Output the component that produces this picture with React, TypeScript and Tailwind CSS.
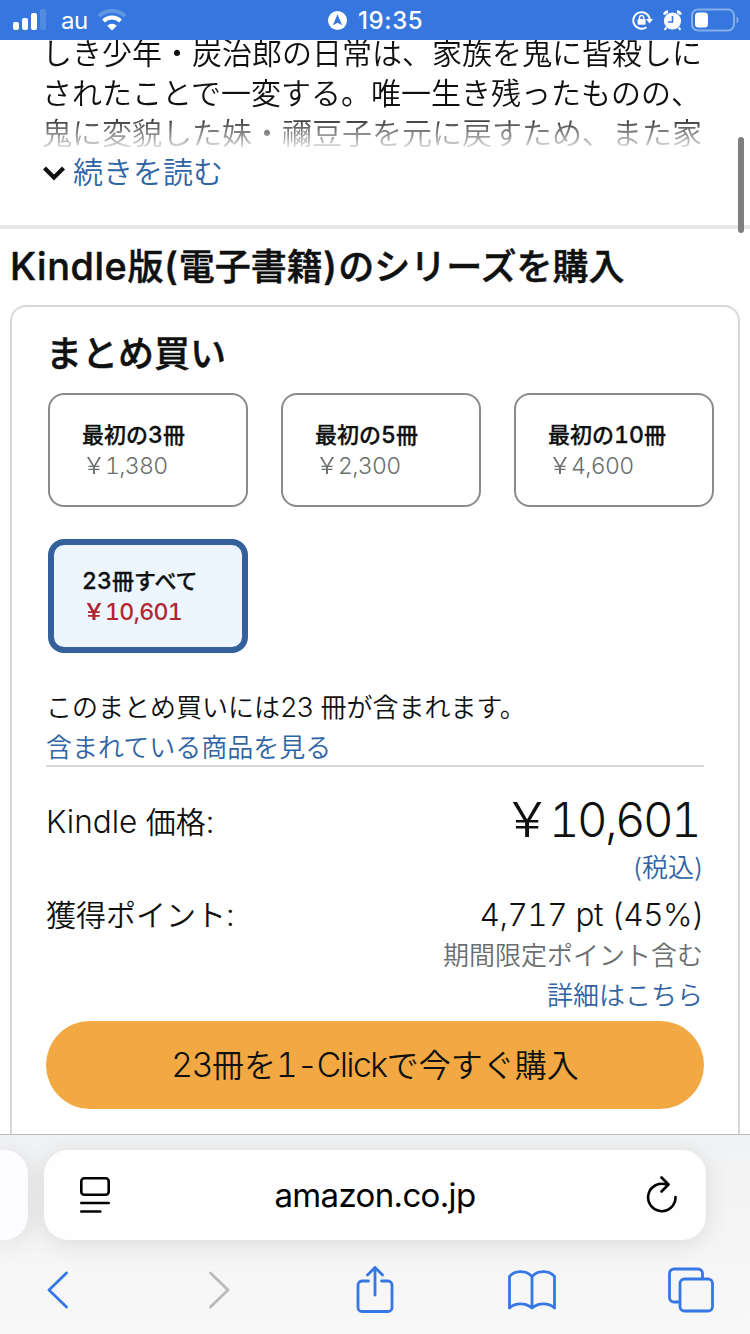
import type { ReactNode } from "react";

const bundles = [
  { title: "最初の3冊", price: "1,380" },
  { title: "最初の5冊", price: "2,300" },
  { title: "最初の10冊", price: "4,600" },
  { title: "23冊すべて", price: "10,601", selected: true },
];

export default function App() {
  return (
    <div className="relative flex h-[1334px] w-[750px] flex-col overflow-hidden bg-white font-['Inter','Noto_Sans_CJK_JP',sans-serif] font-[350] text-[#0f1111] whitespace-nowrap">
      <StatusBar />
      <main className="h-[1094px] overflow-hidden">
        <Description />
        <Series />
      </main>
      <BrowserBar />
      <div className="absolute top-[137px] right-[6px] h-24 w-1.5 rounded-full bg-[#7f7f7f]" />
    </div>
  );
}

// latin runs sit a touch larger than the kana around them
const Mixed = ({ text, latin = "tracking-[-0.015em]" }: { text: string; latin?: string }) => (
  <>
    {text.split(/([!-~]+)/).map((part, i) =>
      i % 2 ? (
        <span key={i} className={`text-[1.05em] tabular-nums ${latin}`}>
          {part}
        </span>
      ) : (
        part
      )
    )}
  </>
);

const Yen = ({ amount, className }: { amount: string; className: string }) => (
  <span className={`text-[1.05em] tabular-nums ${className}`}>
    <span className="inline-block w-[1em] scale-x-120 text-center">¥</span>
    {amount}
  </span>
);

const StatusBar = () => (
  <header className="flex h-10 shrink-0 items-center bg-[#3577de] text-white">
    <div className="flex w-[328px] items-center pl-[13px]">
      <svg width="33" height="22" viewBox="0 0 33 22" fill="currentColor">
        <rect x="0" y="13" width="6" height="8" rx="2" />
        <rect x="9" y="9" width="6" height="12" rx="2" />
        <rect x="18" y="4" width="6" height="17" rx="2" />
        <rect x="27" y="0" width="6" height="21" rx="2" opacity=".15" />
      </svg>
      <span className="ml-[15px] pt-px text-[24px] leading-10 font-normal tracking-[-0.6px]">au</span>
      <svg className="ml-[10px]" width="30" height="22" viewBox="0 0 30 22" fill="none" stroke="currentColor">
        <path d="M2 7.2a18.5 18.5 0 0 1 26 0" strokeWidth="4" opacity=".22" />
        <path d="M6.5 12a12 12 0 0 1 17 0" strokeWidth="4" />
        <path d="M15 21.5l-4.8-4.8a7 7 0 0 1 9.6 0z" fill="currentColor" stroke="none" />
      </svg>
    </div>
    <div className="flex flex-1 items-center">
      <svg width="19" height="19" viewBox="0 0 19 19">
        <circle cx="9.5" cy="9.5" r="9.5" fill="#fff" />
        <path d="M9.5 3.3l4.6 11-4.6-2.5-4.6 2.5z" fill="#3577de" />
      </svg>
      <span className="ml-[11px] pt-px text-[24px] leading-10 font-medium tracking-[0.6px]">19:35</span>
    </div>
    <div className="flex items-center pr-[11px]">
      <svg width="21" height="20" viewBox="0 0 21 20" fill="none" stroke="currentColor" strokeWidth="2">
        <path d="M14.5 17.2A8.3 8.3 0 1 1 17.8 9" />
        <path d="M14 9h7l-3.5 4.5z" fill="currentColor" stroke="none" />
        <rect x="5.6" y="9" width="8" height="5.8" rx="1" fill="currentColor" stroke="none" />
        <path d="M7.5 9.5V7.6a2.1 2.1 0 0 1 4.2 0v1.9" strokeWidth="1.5" />
      </svg>
      <svg className="ml-[10px]" width="19" height="21" viewBox="0 0 19 21" fill="none" stroke="currentColor">
        <circle cx="9.5" cy="11" r="8.6" fill="currentColor" stroke="none" />
        <path d="M1.2 4.6A5 5 0 0 1 5 1.5M14 1.5a5 5 0 0 1 3.8 3.1" strokeWidth="2.8" />
        <path d="M3.5 17.5l-2 2.4M15.5 17.5l2 2.4" strokeWidth="2" />
        <path d="M9.5 6v6H5" stroke="#3577de" strokeWidth="1.6" />
      </svg>
      <svg className="ml-[9px]" width="48" height="24" viewBox="0 0 48 24">
        <rect x="1" y="1.5" width="42" height="21" rx="6" fill="none" stroke="#fff" strokeOpacity=".4" strokeWidth="2" />
        <rect x="4" y="4.5" width="13" height="15" rx="3.5" fill="#fff" />
        <path d="M45.5 8.5a4 4 0 0 1 0 7z" fill="#fff" opacity=".4" />
      </svg>
    </div>
  </header>
);

const Description = () => (
  <section className="flow-root h-[189px] border-b-4 border-[#e7e7e7] pl-[42px]">
    <div className="-mt-[7px] h-[120px] overflow-hidden text-[30px] leading-10 [mask-image:linear-gradient(black_80px,transparent_120px)]">
      <p>しき少年・炭治郎の日常は、家族を鬼に皆殺しに</p>
      <p>されたことで一変する。唯一生き残ったものの、</p>
      <p>鬼に変貌した妹・禰豆子を元に戻すため、また家</p>
    </div>
    <a className="flex h-[38px] items-center text-[#2f64a5]">
      <svg className="mt-0.5" width="24" height="18" viewBox="0 0 24 18" fill="none" stroke="#0f1111" strokeWidth="4.2">
        <path d="M2.5 4l9.5 9.5L21.5 4" />
      </svg>
      <span className="ml-[7px] text-[30px] leading-10">続きを読む</span>
    </a>
  </section>
);

const Series = () => (
  <section className="px-[10px]">
    <h2 className="h-[76px] text-[36px] leading-[74px] font-medium [-webkit-text-stroke:0.5px]">
      <Mixed text="Kindle版(電子書籍)のシリーズを購入" latin="tracking-[0.6px]" />
    </h2>
    <div className="h-[860px] rounded-t-[16px] border-2 border-b-0 border-[#d5d9d9] pl-[34px]">
      <h3 className="h-[86px] pt-[21px] text-[36px] leading-[52px] font-medium [-webkit-text-stroke:0.5px]">
        まとめ買い
      </h3>
      <div className="ml-0.5 grid grid-cols-[repeat(3,200px)] gap-x-[33px] gap-y-8">
        {bundles.map(b => (
          <button
            key={b.title}
            className={`h-[114px] rounded-[16px] text-left text-[22px] leading-8 ${
              b.selected ? "border-[6px] border-[#34619c] bg-[#edf6fe] pl-7" : "border-2 border-[#888c8c] pl-8"
            }`}>
            <p className="h-8 leading-[34px] font-medium [-webkit-text-stroke:0.3px]">
              <Mixed text={b.title} latin="" />
            </p>
            <p className={b.selected ? "font-medium text-[#b12730]" : "text-[#6b6f6f]"}>
              <Yen amount={b.price} className="tracking-[-0.03em]" />
            </p>
          </button>
        ))}
      </div>
      <div className="mt-[34px] w-[658px] border-b-2 border-[#d5d9d9] text-[26px] leading-[42px]">
        <p className="h-10">
          <Mixed text="このまとめ買いには23 冊が含まれます。" latin="tracking-[-0.04em]" />
        </p>
        <a className="block h-[38px] text-[#2f64a5]">含まれている商品を見る</a>
      </div>
      <dl className="w-[658px]">
        <Row label="Kindle 価格:" className="mt-[23px] h-[64px] leading-[64px]">
          <span className="mr-[5px] text-[45px] leading-[60px]">
            <Yen amount="10,601" className="tracking-[-0.055em]" />
          </span>
        </Row>
        <Note className="h-9 leading-7 text-[#2f64a5]">(税込)</Note>
        <Row label="獲得ポイント:" className="h-[46px] leading-[49px]">
          <Mixed text="4,717 pt (45%)" />
        </Row>
        <Note className="h-10 leading-10 text-[#6b6f6f]">期間限定ポイント含む</Note>
        <Note className="h-[45px] leading-10 text-[#2f64a5]">詳細はこちら</Note>
      </dl>
      <button className="h-[88px] w-[658px] rounded-full bg-[#f2a944] text-[32px]">
        <Mixed text="23冊を1-Clickで今すぐ購入" latin="tracking-[-0.04em]" />
      </button>
    </div>
  </section>
);

const Row = (props: { label: string; className: string; children: ReactNode }) => (
  <div className={`flex justify-between text-[30px] ${props.className}`}>
    <dt>
      <Mixed text={props.label} latin="" />
    </dt>
    <dd>{props.children}</dd>
  </div>
);

const Note = (props: { className: string; children: ReactNode }) => (
  <dd className={`pr-px text-right text-[26px] ${props.className}`}>{props.children}</dd>
);

const BrowserBar = () => (
  <footer className="h-[200px] shrink-0 border-t border-[#b9babb] bg-linear-to-b from-[#f1f2f3] to-[#f8f8f9]">
    <div className="flex gap-4 pt-[15px]">
      <div className="h-[90px] w-7 rounded-r-[24px] bg-[#fdfdff] shadow-[0_4px_26px_rgba(0,0,0,0.11)]" />
      <div className="flex h-[90px] w-[662px] items-center justify-between rounded-[24px] bg-[#fefefe] pr-7 pl-9 shadow-[0_4px_26px_rgba(0,0,0,0.11)]">
        <svg width="30" height="38" viewBox="0 0 30 38" fill="none" stroke="#000" strokeWidth="2.6" strokeLinecap="round">
          <rect x="1.3" y="2.3" width="27.4" height="16.4" rx="3" />
          <path d="M1.3 27h27.4M1.3 35.5h19" />
        </svg>
        <span className="mt-0.5 mr-1.5 text-[33px] font-normal tracking-[-0.65px] text-black">amazon.co.jp</span>
        <svg width="32" height="38" viewBox="0 0 32 38" fill="none" stroke="#000" strokeWidth="2.6" strokeLinecap="round" strokeLinejoin="round">
          <path d="M29.5 21A13.7 13.7 0 1 1 21.5 9" />
          <path d="M15.5 1.5l7 7-7 7" />
        </svg>
      </div>
    </div>
    <nav className="flex h-[94px] items-center justify-between pt-1.5 pr-9 pl-[46px] text-[#3577e5]">
      <Glyph width={23}>
        <path d="M20.5 8L3 25l17.5 17" />
      </Glyph>
      <Glyph width={22} className="ml-[82px] text-[#bababc]">
        <path d="M2.5 8L20 25 2.5 42" />
      </Glyph>
      <Glyph width={38} className="ml-[69px]">
        <path d="M12.5 16H6a4 4 0 0 0-4 4v22.5a4 4 0 0 0 4 4h26a4 4 0 0 0 4-4V20a4 4 0 0 0-4-4h-6.5" />
        <path d="M19 30V2.5M11.5 10L19 2.5l7.5 7.5" />
      </Glyph>
      <Glyph width={50} className="ml-[57px]">
        <path d="M25 11.5C19 5 8 5 2.5 11.5V43c6-5.5 16-5.5 22.5 0 6.5-5.5 16.5-5.5 22.5 0V11.5C42 5 31 5 25 11.5zV43" />
      </Glyph>
      <Glyph width={46} className="ml-[54px]">
        <path d="M10.5 37H6a4.5 4.5 0 0 1-4.5-4.5v-24A4.5 4.5 0 0 1 6 4h24a4.5 4.5 0 0 1 4.5 4.5V13" />
        <rect x="12" y="14" width="32.5" height="32" rx="4.5" />
      </Glyph>
    </nav>
  </footer>
);

const Glyph = (props: { width: number; className?: string; children: ReactNode }) => (
  <svg
    className={props.className}
    width={props.width}
    height="50"
    viewBox={`0 0 ${props.width} 50`}
    fill="none"
    stroke="currentColor"
    strokeWidth="2.8"
    strokeLinecap="round"
    strokeLinejoin="round">
    {props.children}
  </svg>
);
